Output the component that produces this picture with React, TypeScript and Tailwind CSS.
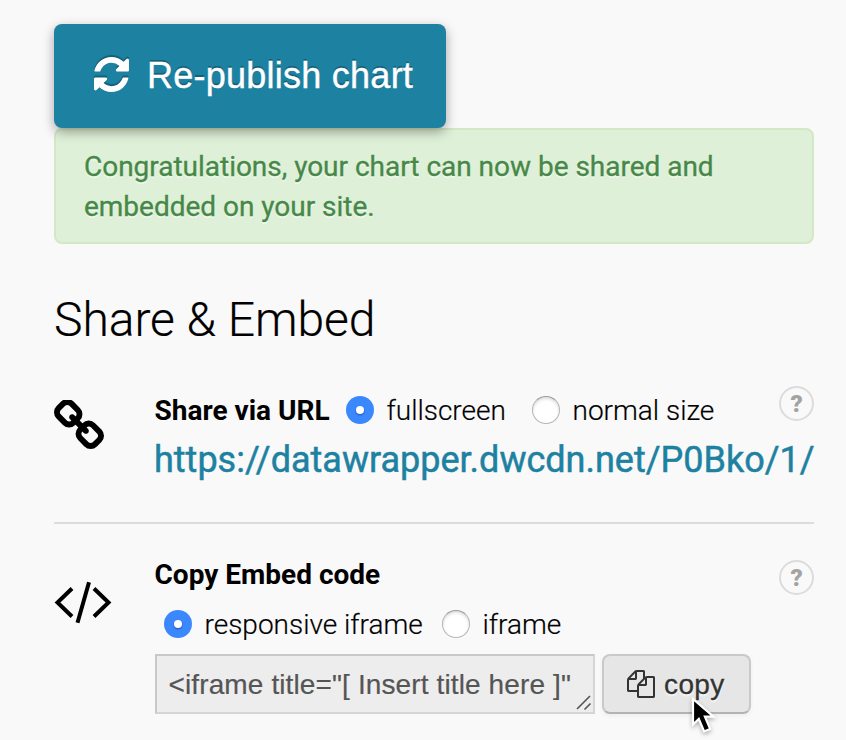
import type { ReactNode } from "react";

const helvetica = "font-['Liberation_Sans',Arial,sans-serif]";

function RefreshIcon() {
  return (
    <svg viewBox="0 128 1536 1536" className="mb-[4px] h-[35px] w-[35px] shrink-0 overflow-visible drop-shadow-[0_-2px_0_rgba(0,0,0,0.25)]" fill="currentColor">
      <path d="M1511 1056q0 5-1 7-64 268-268 434.500t-478 166.500q-146 0-282.500-55t-243.500-157l-129 129q-19 19-45 19t-45-19-19-45v-448q0-26 19-45t45-19h448q26 0 45 19t19 45-19 45l-137 137q71 66 161 102t187 36q134 0 250-65t186-179q11-17 53-117 8-23 30-23h192q13 0 22.500 9.500t9.500 22.500zm25-800v448q0 26-19 45t-45 19h-448q-26 0-45-19t-19-45 19-45l138-138q-148-137-349-137-134 0-250 65t-186 179q-11 17-53 117-8 23-30 23h-199q-13 0-22.500-9.500t-9.500-22.500v-7q65-268 270-434.500t480-166.500q146 0 284 55.500t245 156.500l130-129q19-19 45-19t45 19 19 45z" />
    </svg>
  );
}

function LinkIcon() {
  return (
    <svg viewBox="80 64 1632 1600" className="mt-[15px] h-[50px] w-[50px]" fill="#000">
      <path d="M1520 1216q0-40-28-68l-208-208q-28-28-68-28-42 0-72 32 3 3 19 18.500t21.500 21.500 15 19 13 25.500 3.500 27.500q0 40-28 68t-68 28q-15 0-27.500-3.500t-25.500-13-19-15-21.500-21.500-18.500-19q-33 31-33 73 0 40 28 68l206 207q27 27 68 27 40 0 68-26l147-146q28-28 28-67zm-703-705q0-40-28-68l-206-207q-28-28-68-28-39 0-68 27l-147 146q-28 28-28 67 0 40 28 68l208 208q27 27 68 27 42 0 72-31-3-3-19-18.500t-21.500-21.500-15-19-13-25.500-3.500-27.500q0-40 28-68t68-28q15 0 27.500 3.500t25.500 13 19 15 21.500 21.500 18.500 19q33-31 33-73zm895 705q0 120-85 203l-147 146q-83 83-203 83-121 0-204-85l-206-207q-83-83-83-203 0-123 88-209l-88-88q-86 88-208 88-120 0-204-84l-208-208q-84-84-84-204t85-203l147-146q83-83 203-83 121 0 204 85l206 207q83 83 83 203 0 123-88 209l88 88q86-88 208-88 120 0 204 84l208 208q84 84 84 204z" />
    </svg>
  );
}

function CodeIcon() {
  return (
    <svg viewBox="0 0 58 44" className="mt-[31px] h-[44px] w-[58px]" fill="none" stroke="#000" strokeWidth="4">
      <path d="M18 7.500 3.500 21.500 18 35.500M40 7.500 54.500 21.500 40 35.500M35 1.300 23.500 41.700" />
    </svg>
  );
}

function CopyIcon() {
  return (
    <svg viewBox="0 0 1792 1792" className="h-7 w-7 shrink-0" fill="currentColor">
      <path d="M1696 384q40 0 68 28t28 68v1216q0 40-28 68t-68 28h-960q-40 0-68-28t-28-68v-288h-544q-40 0-68-28t-28-68v-672q0-40 20-88t48-76l408-408q28-28 76-48t88-20h416q40 0 68 28t28 68v328q68-40 128-40h416zm-544 213l-299 299h299v-299zm-640-384l-299 299h299v-299zm196 647l316-316v-416h-384v416q0 40-28 68t-68 28h-416v640h512v-256q0-40 20-88t48-76zm956 804v-1152h-384v416q0 40-28 68t-68 28h-416v640h896z" />
    </svg>
  );
}

function Radio({ checked = false }: { checked?: boolean }) {
  return checked ? (
    <span className="flex h-7 w-7 shrink-0 items-center justify-center rounded-full bg-[#3b88fd]">
      <span className="h-2 w-2 rounded-full bg-white shadow-[0_1px_2px_rgba(0,0,0,0.4)]" />
    </span>
  ) : (
    <span className="h-7 w-7 shrink-0 rounded-full border border-[#b5b5b5] border-t-[#999] bg-white shadow-[inset_0_2px_3px_rgba(0,0,0,0.13)]" />
  );
}

function Help() {
  return (
    <span className="flex h-[35px] w-[35px] shrink-0 items-center justify-center rounded-full border-2 border-[#dcdcdc] text-[24px] leading-none font-black text-[#a3a3a3]">
      ?
    </span>
  );
}

function Label({ children, className }: { children: ReactNode; className: string }) {
  return <span className={`text-[28px] leading-10 font-light [-webkit-text-stroke:0.2px_currentColor] ${className}`}>{children}</span>;
}

export default function App() {
  return (
    <main className="relative h-[740px] w-[846px] overflow-hidden bg-[#f9f9f9] pt-6 pl-[54px] font-[Roboto,sans-serif] whitespace-nowrap text-black">
      <button className={`relative flex h-[104px] w-[392px] items-center rounded-lg bg-[#1d81a2] pl-10 text-white shadow-[0_4px_12px_rgba(0,0,0,0.35)] ${helvetica}`}>
        <RefreshIcon />
        <span className="ml-[18px] text-[36px] leading-[48px] tracking-[0.25px] [-webkit-text-stroke:0.4px_currentColor] [text-shadow:0_-2px_0_rgba(0,0,0,0.25)]">Re-publish chart</span>
      </button>

      <div className="h-[116px] w-[760px] rounded-lg border-2 border-[#d3e8c5] bg-[#dff0d8] pt-[17px] pl-7 text-[28px] leading-10 tracking-[-0.02px] text-[#468847] [-webkit-text-stroke:0.3px_currentColor] [text-shadow:0_2px_0_rgba(255,255,255,0.5)]">
        <p>Congratulations, your chart can now be shared and</p>
        <p>embedded on your site.</p>
      </div>

      <h1 className="mt-[44px] h-[64px] text-[48px] leading-[64px] font-light tracking-[-0.05px] [-webkit-text-stroke:0.2px_currentColor]">Share &amp; Embed</h1>

      <section className="mt-[33px] flex h-[139px] w-[760px] border-b-2 border-[#dcdcdc]">
        <div className="w-[100px] shrink-0"><LinkIcon /></div>
        <div className="w-[660px]">
          <div className="flex h-[50px] items-center">
            <strong className="w-[192px] pt-0.5 pl-[0.5px] text-[28px] leading-10">Share via URL</strong>
            <Radio checked />
            <Label className="ml-3 w-[146px] pt-0.5 pl-[0.5px]">fullscreen</Label>
            <Radio />
            <Label className="ml-[12.5px] w-[206.5px] pt-0.5">normal size</Label>
            <div className="mb-[13px]"><Help /></div>
          </div>
          <a className="block text-[36px] leading-[50px] text-[#1d81a2] [-webkit-text-stroke:0.5px_currentColor]">https://datawrapper.dwcdn.net/P0Bko/1/</a>
        </div>
      </section>

      <section className="mt-[26px] flex w-[760px]">
        <div className="w-[100px] shrink-0"><CodeIcon /></div>
        <div className="w-[660px]">
          <div className="flex h-[50px] items-center justify-between">
            <strong className="pl-[0.5px] text-[28px] leading-10">Copy Embed code</strong>
            <div className="mt-[5px]"><Help /></div>
          </div>
          <div className="flex h-[50px] items-center pb-0.5 pl-[10px]">
            <Radio checked />
            <Label className="ml-[12.5px] w-[237.5px] pt-0.5">responsive iframe</Label>
            <Radio />
            <Label className="ml-[12.5px] pt-0.5">iframe</Label>
          </div>
          <div className={`mt-[4px] flex gap-[7px] ${helvetica}`}>
            <div className="relative ml-px flex h-[60px] w-[440px] items-center border-2 border-[#d5d5d5] border-t-[#c8c8c8] border-l-[#c8c8c8] bg-[#ededed] pt-0.5 pl-[11.5px] text-[28px] tracking-[0.12px] text-[#555] [-webkit-text-stroke:0.2px_currentColor]">
              &lt;iframe title="[ Insert title here ]"
              <svg viewBox="0 0 16 16" className="absolute right-px bottom-px h-4 w-4" fill="none" stroke="#555" strokeWidth="1.600">
                <path d="M1 14 14 1M8.500 14.500 14.500 8.500" />
              </svg>
            </div>
            <button className="flex h-[60px] w-[149px] items-center rounded-lg border-2 border-[#c9c9c9] border-b-[#b3b3b3] bg-[#e6e6e6] pl-[23px] text-[#333] shadow-[0_2px_4px_rgba(0,0,0,0.05)]">
              <CopyIcon />
              <span className="ml-[9px] pt-0.5 text-[28px] leading-10 tracking-[0.4px] [-webkit-text-stroke:0.3px_currentColor] [text-shadow:0_2px_2px_rgba(255,255,255,0.75)]">copy</span>
            </button>
          </div>
        </div>
      </section>

      <svg viewBox="0 0 26 38" className="absolute top-[697px] left-[691px] h-[38px] w-[26px] drop-shadow-[0_2px_2px_rgba(0,0,0,0.3)]">
        <path d="M2 2v25.500l5.800-5.600 5.300 12.500 6-2.500-5.200-12.300h8.600z" fill="#000" stroke="#fff" strokeWidth="2.200" />
      </svg>
    </main>
  );
}
